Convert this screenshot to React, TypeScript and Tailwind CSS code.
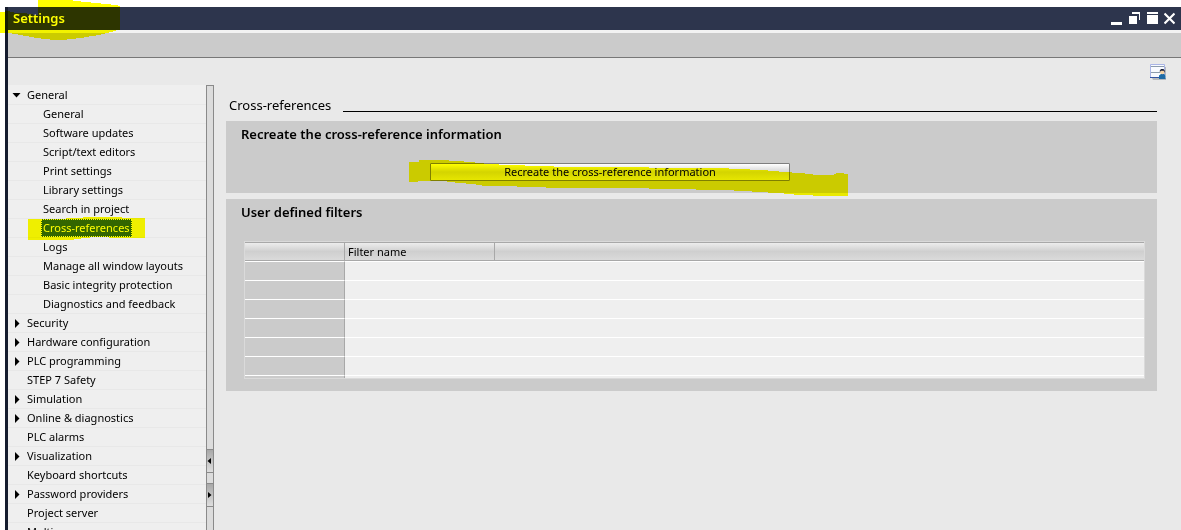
import { useState } from "react";

type NavItem = {
  label: string;
  level?: number;
  arrow?: "open" | "closed";
};

const navItems: NavItem[] = [
  { label: "General", arrow: "open" },
  { label: "General", level: 1 },
  { label: "Software updates", level: 1 },
  { label: "Script/text editors", level: 1 },
  { label: "Print settings", level: 1 },
  { label: "Library settings", level: 1 },
  { label: "Search in project", level: 1 },
  { label: "Cross-references", level: 1 },
  { label: "Logs", level: 1 },
  { label: "Manage all window layouts", level: 1 },
  { label: "Basic integrity protection", level: 1 },
  { label: "Diagnostics and feedback", level: 1 },
  { label: "Security", arrow: "closed" },
  { label: "Hardware configuration", arrow: "closed" },
  { label: "PLC programming", arrow: "closed" },
  { label: "STEP 7 Safety" },
  { label: "Simulation", arrow: "closed" },
  { label: "Online & diagnostics", arrow: "closed" },
  { label: "PLC alarms" },
  { label: "Visualization", arrow: "closed" },
  { label: "Keyboard shortcuts" },
  { label: "Password providers", arrow: "closed" },
  { label: "Project server" },
  { label: "Multiuser" },
];

export default function App() {
  const [selected, setSelected] = useState("Cross-references");

  return (
    <div className="relative h-screen overflow-hidden bg-white pt-[7px] pl-[5px] font-['Noto_Sans','Open_Sans',sans-serif] text-[11px] text-black">
      <div className="flex h-full flex-col border-l-3 border-[#151c2e] bg-[#e9e9e9]">
        <TitleBar />
        <div className="h-7 shrink-0 border-t-3 border-b border-t-[#f2f2f2] border-b-[#777777] bg-[#cbcbcb]" />
        <div className="flex h-[27px] shrink-0 items-center justify-end pr-[14px]">
          <button aria-label="Save window settings">
            <WindowUserIcon />
          </button>
        </div>
        <div className="flex min-h-0 flex-1">
          <nav className="w-[198px] shrink-0 overflow-hidden bg-[#efefef] pt-px">
            <ul>
              {navItems.map((item, i) => (
                <NavRow
                  key={i}
                  item={item}
                  selected={item.level === 1 && item.label === selected}
                  onSelect={() => setSelected(item.label)}
                />
              ))}
            </ul>
          </nav>
          <Splitter />
          <main className="min-w-0 flex-1 pt-2 pr-6 pl-3">
            <div className="flex h-7 items-start">
              <h1 className="w-[117px] shrink-0 pl-[3px] text-[13px] leading-6">Cross-references</h1>
              <div className="mt-[18px] h-px flex-1 bg-black" />
            </div>
            <RecreatePanel />
            <FiltersPanel />
          </main>
        </div>
      </div>

      <svg
        className="pointer-events-none absolute top-0 left-0 mix-blend-multiply"
        width="120"
        height="40"
        viewBox="0 0 120 40"
        shapeRendering="crispEdges"
        aria-hidden="true"
      >
        <path
          d="M38 0H73V1H81V2H91V3H101V4H111V5H118V6H120V30H116V31H113V32H109V33H105V34H101V35H96V36H89V37H84V38H76V39H67V40H50V39H41V38H34V37H29V36H23V35H18V34H12V33H0V12H5V11H10V12H14V13H27V14H33V15H38Z"
          fill="#ffff00"
        />
      </svg>
    </div>
  );
}

function TitleBar() {
  return (
    <header className="flex h-[23px] shrink-0 items-center justify-between bg-[#2d354d] pr-1.5 pl-[5px]">
      <span className="text-[13px] font-semibold text-white">Settings</span>
      <div className="flex gap-[5px] text-white">
        <button aria-label="Minimize">
          <svg width="13" height="13" viewBox="0 0 13 13" fill="currentColor" shapeRendering="crispEdges">
            <path d="M1 10h11v3H1z" />
          </svg>
        </button>
        <button aria-label="Restore">
          <svg width="13" height="13" viewBox="0 0 13 13" fill="currentColor" shapeRendering="crispEdges">
            <path d="M4 0h8v8h-1V2H4zM1 4h8v8H1z" />
          </svg>
        </button>
        <button aria-label="Maximize">
          <svg width="13" height="13" viewBox="0 0 13 13" fill="currentColor" shapeRendering="crispEdges">
            <path d="M1 0h11v2H1zM1 3h11v9H1z" />
          </svg>
        </button>
        <button aria-label="Close">
          <svg width="11" height="13" viewBox="0 0 11 13" stroke="currentColor" strokeWidth="2.2">
            <path d="M0.5 1.5l10 10M10.5 1.5l-10 10" />
          </svg>
        </button>
      </div>
    </header>
  );
}

function NavRow({ item, selected, onSelect }: { item: NavItem; selected: boolean; onSelect: () => void }) {
  return (
    <li
      className={`relative flex h-[19px] items-center border-b border-[#e8e8e8] ${
        item.level === 1 ? "pl-[33px]" : "pl-1"
      }`}
    >
      {!item.level && (
        <span className="flex w-[13px] shrink-0">
          {item.arrow === "open" && (
            <svg width="9" height="9" viewBox="0 0 9 9" aria-hidden="true">
              <path d="M0.5 2h8L4.5 6.5z" />
            </svg>
          )}
          {item.arrow === "closed" && (
            <svg width="9" height="9" viewBox="0 0 9 9" aria-hidden="true">
              <path d="M3 0v9L7.5 4.5z" />
            </svg>
          )}
        </span>
      )}
      <button
        onClick={onSelect}
        className={`h-[18px] px-px leading-4 whitespace-nowrap ${
          selected ? "border border-dotted border-white bg-[#336699] text-white" : "border border-transparent"
        }`}
      >
        {item.label}
      </button>
      {selected && (
        <svg
          className="pointer-events-none absolute -top-0.5 left-5 mix-blend-multiply"
          width="117"
          height="23"
          viewBox="0 0 117 23"
          shapeRendering="crispEdges"
          aria-hidden="true"
        >
          <path d="M0 2H38V1H55V0H94V1H117V21H81V20H62V21H53V22H46V23H0Z" fill="#ffff00" />
        </svg>
      )}
    </li>
  );
}

function Splitter() {
  return (
    <div className="flex w-2 shrink-0 flex-col gap-[10px] border-t border-r border-l border-[#8a8a8a] bg-[#dcdcdc] pt-[363px]">
      <button
        aria-label="Collapse navigation"
        className="flex h-6 shrink-0 items-center border-y border-[#8a8a8a] bg-linear-to-b from-[#a8a8a8] to-[#dedede]"
      >
        <svg width="5" height="6" viewBox="0 0 5 6">
          <path d="M4 0v6L0.5 3z" />
        </svg>
      </button>
      <button
        aria-label="Expand navigation"
        className="flex h-6 shrink-0 items-center border-y border-[#8a8a8a] bg-linear-to-b from-[#a8a8a8] to-[#dedede]"
      >
        <svg width="5" height="6" viewBox="0 0 5 6">
          <path d="M1 0v6L4.5 3z" />
        </svg>
      </button>
    </div>
  );
}

function RecreatePanel() {
  return (
    <section className="h-[72px] bg-[#cbcbcb] px-[15px] pt-1">
      <h2 className="text-[13px] leading-[18px] font-semibold">Recreate the cross-reference information</h2>
      <div className="relative mt-5 ml-[189px] w-[360px]">
        <button className="block h-[18px] w-full rounded-[1px] border border-[#7f7f7f] bg-linear-to-b from-white via-[#d4d4d4] to-[#e6e6e6] leading-4">
          Recreate the cross-reference information
        </button>
        <svg
          className="pointer-events-none absolute -top-[3px] -left-[21px] mix-blend-multiply"
          width="439"
          height="36"
          viewBox="0 0 439 36"
          shapeRendering="crispEdges"
          aria-hidden="true"
        >
          <path
            d="M0 2H10V0H40V1H55V2H66V3H75V4H90V5H116V6H145V7H240V8H320V9H341V10H359V11H370V12H383V13H396V14H404V15H425V14H427V13H435V14H439V36H404V35H385V34H375V33H359V32H343V31H325V30H287V29H240V28H137V27H108V26H73V25H67V24H57V23H46V22H38V21H9V22H0Z"
            fill="#ffff00"
          />
        </svg>
      </div>
    </section>
  );
}

function FiltersPanel() {
  return (
    <section className="mt-1.5 bg-[#cbcbcb] px-[15px] pt-1 pb-3">
      <h2 className="text-[13px] leading-[18px] font-semibold">User defined filters</h2>
      <div className="mt-5 mr-[-3px] ml-[3px] h-[138px] overflow-hidden border border-[#dadada]">
        <table className="w-full table-fixed border-separate border-spacing-0">
          <thead>
            <tr className="h-[19px] bg-linear-to-b from-[#f0f0f0] via-[#cfcfcf] to-[#dcdcdc] text-left">
              <th className="w-[100px] border-y border-r border-[#a8a8a8] p-0" />
              <th className="w-[150px] border-y border-r border-[#a8a8a8] p-0 pl-[3px] leading-4 font-normal">
                Filter name
              </th>
              <th className="border-y border-[#a8a8a8] p-0" />
            </tr>
          </thead>
          <tbody>
            {Array.from({ length: 7 }, (_, i) => (
              <tr key={i} className="h-[19px]">
                <td className="border-t border-r border-t-white border-r-[#a8a8a8] bg-[#cbcbcb] p-0" />
                <td colSpan={2} className="border-t border-white bg-[#efefef] p-0" />
              </tr>
            ))}
          </tbody>
        </table>
      </div>
    </section>
  );
}

function WindowUserIcon() {
  return (
    <svg width="17" height="16" viewBox="0 0 17 16" aria-hidden="true">
      <path d="M2 14h14v2H3zM15 3h1v8h-1z" fill="#b5b9be" />
      <path d="M0.5 0.5h14v13h-14z" fill="#f8faff" stroke="#a9b4e6" />
      <path d="M1 2h13v1H1zM1 8h13v1H1z" fill="#8c9cad" />
      <path d="M0 13h10v1H0z" fill="#3455a4" />
      <path d="M9 15v-3.5l2-1.5h3l1.5 1.5V15z" fill="#1f6ba5" />
      <circle cx="12.3" cy="8" r="2.3" fill="#f5d3a5" />
      <path d="M9.8 8V6.5L11 5h2.5l1.2 1.5V9l-1-2.2h-2.7z" fill="#182038" />
    </svg>
  );
}
